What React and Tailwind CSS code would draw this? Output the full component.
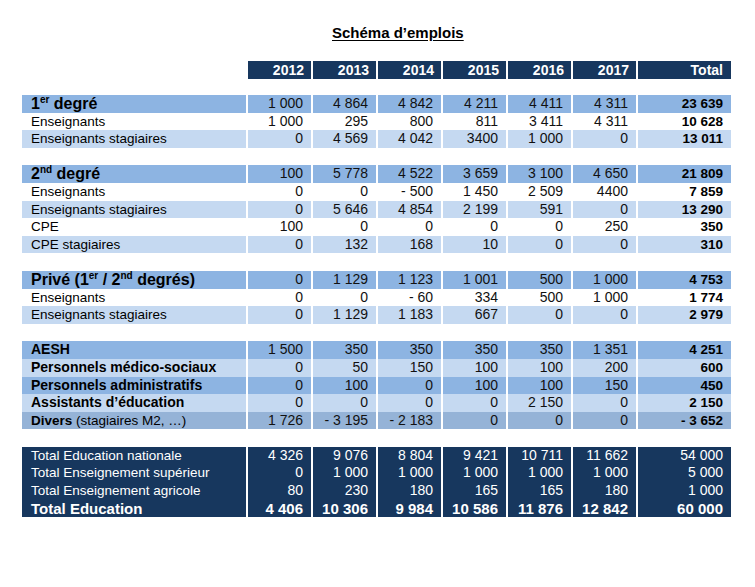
import React from 'react';

const Sup = ({ children }) => (
    <sup className="text-[10px] relative top-[-6px] font-bold">{children}</sup>
);

const years = ['2012', '2013', '2014', '2015', '2016', '2017'];

// bg: couleur de la ligne, head: libellé en gras, sec: titre de section
const rows = [
    { bg: 'bg-[#8db4e2]', sec: true, label: <>1<Sup>er</Sup> degré</>, vals: ['1 000', '4 864', '4 842', '4 211', '4 411', '4 311'], total: '23 639' },
    { bg: 'bg-white', label: 'Enseignants', vals: ['1 000', '295', '800', '811', '3 411', '4 311'], total: '10 628' },
    { bg: 'bg-[#c5d9f1]', label: 'Enseignants stagiaires', vals: ['0', '4 569', '4 042', '3400', '1 000', '0'], total: '13 011' },
    { spacer: true },
    { bg: 'bg-[#8db4e2]', sec: true, label: <>2<Sup>nd</Sup> degré</>, vals: ['100', '5 778', '4 522', '3 659', '3 100', '4 650'], total: '21 809' },
    { bg: 'bg-white', label: 'Enseignants', vals: ['0', '0', '- 500', '1 450', '2 509', '4400'], total: '7 859' },
    { bg: 'bg-[#c5d9f1]', label: 'Enseignants stagiaires', vals: ['0', '5 646', '4 854', '2 199', '591', '0'], total: '13 290' },
    { bg: 'bg-white', label: 'CPE', vals: ['100', '0', '0', '0', '0', '250'], total: '350' },
    { bg: 'bg-[#c5d9f1]', label: 'CPE stagiaires', vals: ['0', '132', '168', '10', '0', '0'], total: '310' },
    { spacer: true },
    { bg: 'bg-[#8db4e2]', sec: true, label: <>Privé (1<Sup>er</Sup> / 2<Sup>nd</Sup> degrés)</>, vals: ['0', '1 129', '1 123', '1 001', '500', '1 000'], total: '4 753' },
    { bg: 'bg-white', label: 'Enseignants', vals: ['0', '0', '- 60', '334', '500', '1 000'], total: '1 774' },
    { bg: 'bg-[#c5d9f1]', label: 'Enseignants stagiaires', vals: ['0', '1 129', '1 183', '667', '0', '0'], total: '2 979' },
    { spacer: true },
    { bg: 'bg-[#8db4e2]', head: true, label: 'AESH', vals: ['1 500', '350', '350', '350', '350', '1 351'], total: '4 251' },
    { bg: 'bg-[#c5d9f1]', head: true, label: 'Personnels médico-sociaux', vals: ['0', '50', '150', '100', '100', '200'], total: '600' },
    { bg: 'bg-[#8db4e2]', head: true, label: 'Personnels administratifs', vals: ['0', '100', '0', '100', '100', '150'], total: '450' },
    { bg: 'bg-[#c5d9f1]', head: true, label: 'Assistants d’éducation', vals: ['0', '0', '0', '0', '2 150', '0'], total: '2 150' },
    { bg: 'bg-[#95b3d7]', label: <><span className="font-bold">Divers</span> (stagiaires M2, …)</>, vals: ['1 726', '- 3 195', '- 2 183', '0', '0', '0'], total: '- 3 652' },
    { spacer: true },
];

const totals = [
    { label: 'Total Education nationale', vals: ['4 326', '9 076', '8 804', '9 421', '10 711', '11 662'], total: '54 000' },
    { label: 'Total Enseignement supérieur', vals: ['0', '1 000', '1 000', '1 000', '1 000', '1 000'], total: '5 000' },
    { label: 'Total Enseignement agricole', vals: ['80', '230', '180', '165', '165', '180'], total: '1 000' },
    { label: 'Total Education', vals: ['4 406', '10 306', '9 984', '10 586', '11 876', '12 842'], total: '60 000', bold: true },
];

const grid = 'grid grid-cols-[224px_repeat(6,63px)_93px] gap-x-[2px]';

export default function App() {
    return (
        <div className="w-[755px] h-[587px] bg-white text-black font-['Liberation_Sans',Arial,sans-serif]">
            <div className="pt-[24px] pl-[332px] text-[15px] leading-[17px]">
                <span className="font-bold underline underline-offset-[2px]">Schéma d’emplois</span>
            </div>

            <div className="ml-[22px] mt-[20px] w-[709px]">
                {/* En-tête */}
                <div className={`${grid} h-[18px] text-[14px] leading-[18px] font-bold text-white`}>
                    <div />
                    {years.map((y) => (
                        <div key={y} className="bg-[#17375e] text-right pr-[7px]">{y}</div>
                    ))}
                    <div className="bg-[#17375e] text-right pr-[8px]">Total</div>
                </div>
                <div className="h-[16px]" />

                {rows.map((r, i) =>
                    r.spacer ? (
                        <div key={i} className="h-[17.6px]" />
                    ) : (
                        <div key={i} className={`${grid} h-[17.6px] text-[13.5px] leading-[17.6px]`}>
                            <div className={`${r.bg} pl-[9px] whitespace-nowrap ${r.sec ? 'font-bold text-[16px]' : r.head ? 'font-bold text-[14px]' : ''}`}>{r.label}</div>
                            {r.vals.map((v, j) => (
                                <div key={j} className={`${r.bg} text-right pr-[8px] text-[14px] text-[#111]`}>{v}</div>
                            ))}
                            <div className={`${r.bg} text-right pr-[8px] font-bold text-[13.5px]`}>{r.total}</div>
                        </div>
                    )
                )}

                {totals.map((r, i) => (
                    <div key={i} className={`${grid} h-[17.6px] text-white leading-[17.6px] ${r.bold ? 'font-bold text-[15px]' : 'text-[13.5px]'}`}>
                        <div className="bg-[#17375e] pl-[9px] whitespace-nowrap">{r.label}</div>
                        {r.vals.map((v, j) => (
                            <div key={j} className={`bg-[#17375e] text-right pr-[8px] ${r.bold ? '' : 'text-[14px]'}`}>{v}</div>
                        ))}
                        <div className={`bg-[#17375e] text-right pr-[8px] ${r.bold ? '' : 'text-[14px]'}`}>{r.total}</div>
                    </div>
                ))}
            </div>
        </div>
    );
}
